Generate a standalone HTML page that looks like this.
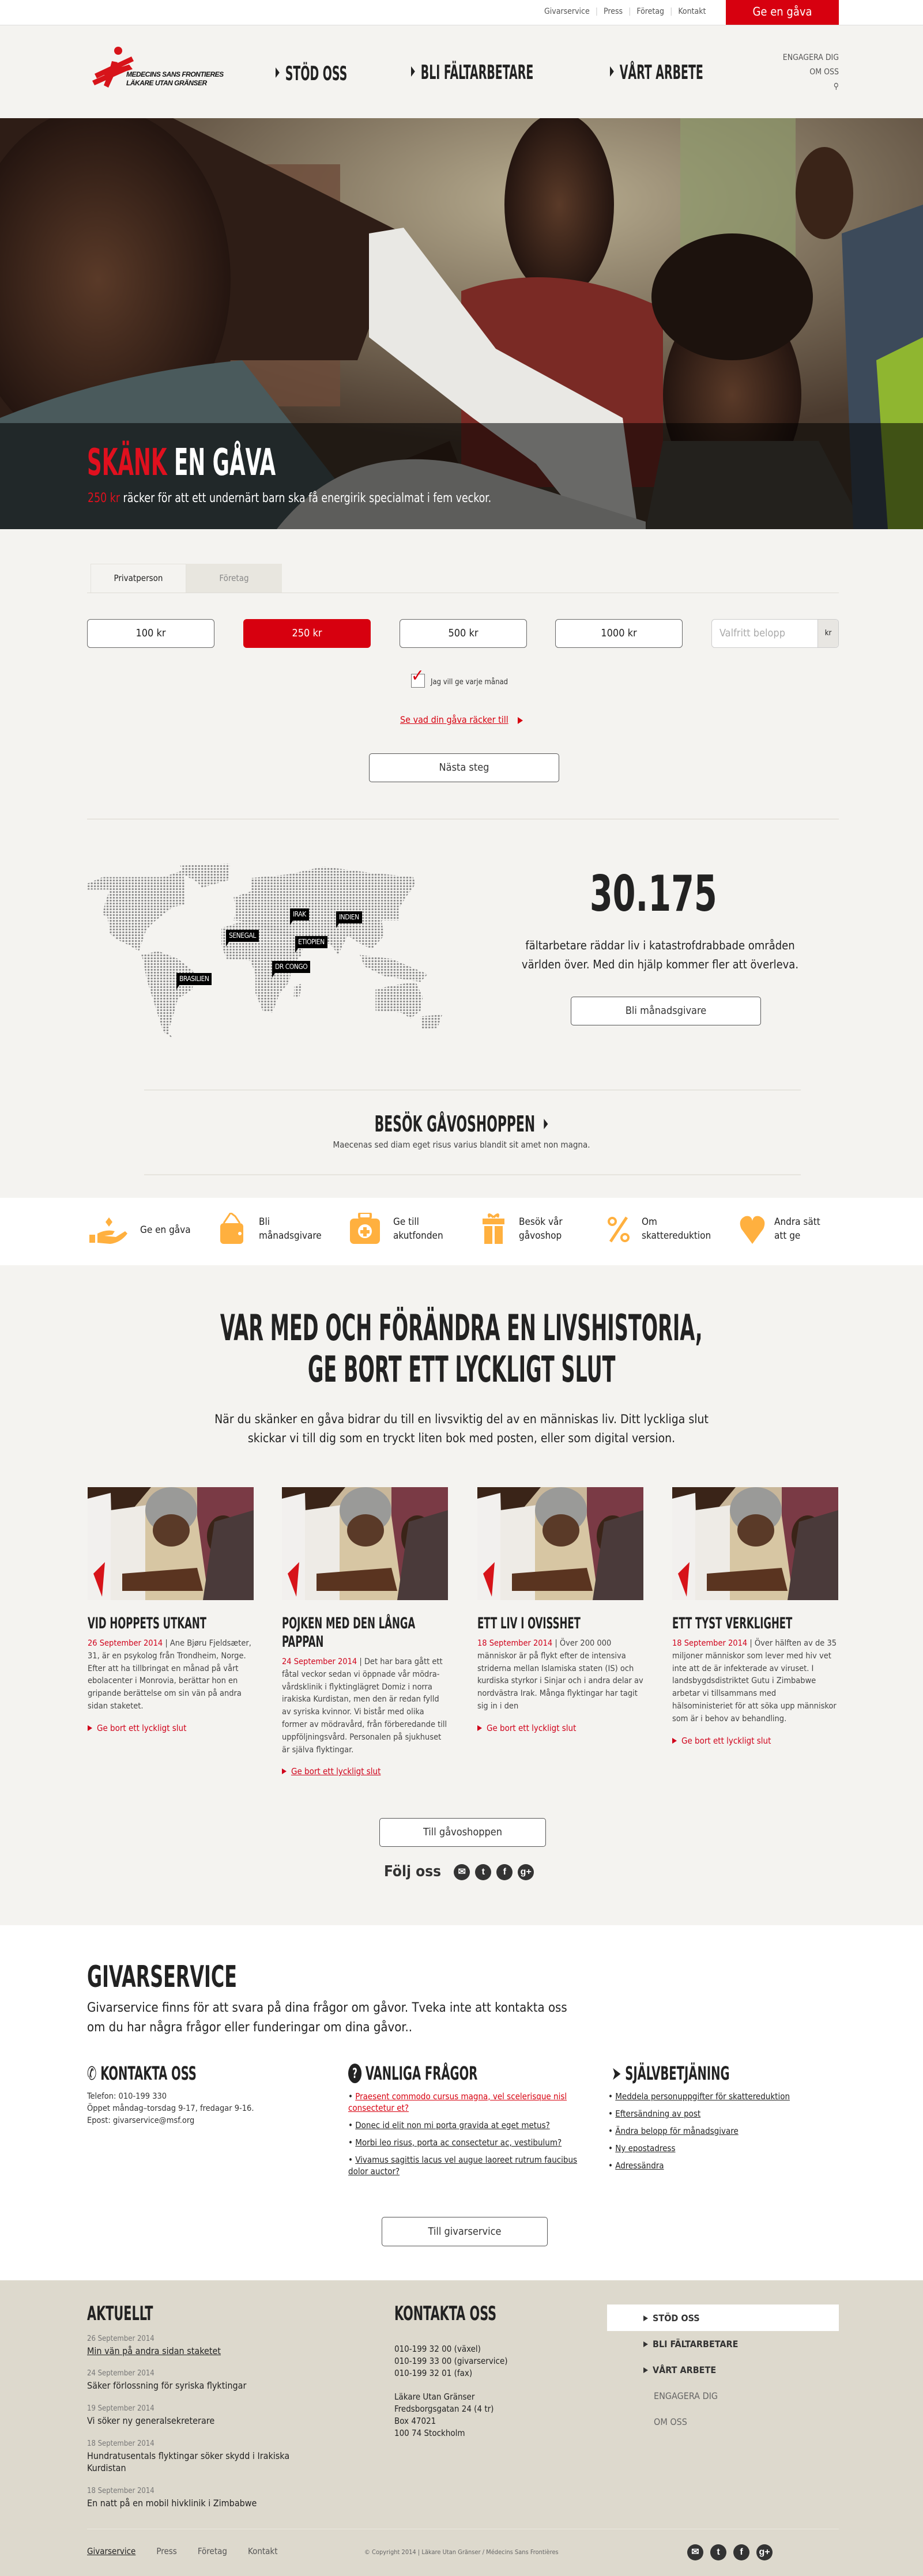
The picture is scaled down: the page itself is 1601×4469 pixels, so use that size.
<!DOCTYPE html>
<html><head><meta charset="utf-8"><style>
*{margin:0;padding:0;box-sizing:border-box}
body{width:1601px;height:4469px;position:relative;background:#f4f3f0;font-family:"Liberation Sans Narrow","DejaVu Sans Condensed","Liberation Sans",sans-serif;color:#222;overflow:hidden}
.a{position:absolute}
.h{font-family:"DejaVu Sans Condensed","Liberation Sans",sans-serif;font-weight:bold;text-transform:uppercase;color:#222;white-space:nowrap}
.sx{display:inline-block;transform:scaleX(.68);transform-origin:left top;white-space:nowrap}
.sxc{display:inline-block;transform:scaleX(.7);transform-origin:center top;white-space:nowrap}
.btn{position:absolute;border:1px solid #555;border-radius:5px;background:#fff;text-align:center;font-size:18px;color:#333}
.amt{position:absolute;top:1074px;height:50px;width:221px;border:1px solid #666;border-radius:6px;background:#fff;text-align:center;line-height:48px;font-size:18px;color:#222}
.tag{position:absolute;background:#000;color:#fff;font-size:12px;line-height:21px;padding:0 5px;letter-spacing:-0.5px}
.tag:after{content:"";position:absolute;left:0;bottom:-8px;border-left:5px solid #000;border-bottom:8px solid transparent}
.ic{position:absolute;top:2108px;font-size:17px;color:#222;line-height:24px}
.card{position:absolute;top:2580px;width:288px}
.card .img{width:288px;height:196px;display:block}
.card h3{font-family:"DejaVu Sans Condensed",sans-serif;font-size:27px;line-height:32px;margin-top:25px;color:#222;text-transform:uppercase;height:auto}
.card p{font-size:14.5px;line-height:21.8px;color:#444;margin-top:8px}
.card p b{color:#d0021b;font-weight:normal}
.card .lk{color:#d0021b;font-size:15px;margin-top:17px}
.tri{display:inline-block;border-left:8px solid #d0021b;border-top:5px solid transparent;border-bottom:5px solid transparent;margin-right:8px}
.ul li{list-style:none;font-size:15px;line-height:20px;margin-bottom:10px}
.ul a{color:#222;text-decoration:underline}
.soc{display:inline-block;width:28px;height:28px;border-radius:50%;background:#333;color:#fff;text-align:center;line-height:28px;font-size:16px;font-weight:bold;margin-right:9px;font-family:"Liberation Sans",sans-serif;vertical-align:middle}
</style></head><body>

<!-- top bar -->
<div class="a" style="left:0;top:0;width:1601px;height:44px;background:#fff;border-bottom:1px solid #ddd"></div>
<div class="a" style="top:12px;left:944px;font-size:14px;color:#555;white-space:nowrap">Givarservice<span style="color:#ccc;margin:0 10px">|</span>Press<span style="color:#ccc;margin:0 10px">|</span>Företag<span style="color:#ccc;margin:0 10px">|</span>Kontakt</div>
<div class="a" style="left:1259px;top:0;width:196px;height:43px;background:#d7000f;color:#fff;font-size:20px;text-align:center;line-height:40px">Ge en gåva</div>

<!-- header -->
<div class="a" style="left:0;top:45px;width:1601px;height:160px;background:#f4f3f0"></div>
<svg class="a" style="left:158px;top:78px" width="90" height="76" viewBox="0 0 90 76">
<circle cx="47" cy="10" r="7" fill="#d7141a"/>
<path d="M6 50 L70 20 L74 28 L10 58Z M2 62 L60 36 L64 44 L6 70Z M20 48 L66 34 L72 42 L26 56Z" fill="#d7141a"/>
<path d="M36 28 L46 30 L40 52 L30 74 L22 70 L30 50Z" fill="#d7141a"/>
</svg>
<div class="a" style="left:219px;top:122px;font-size:12px;font-weight:bold;font-style:italic;color:#111;line-height:15px;font-family:'Liberation Sans',sans-serif;letter-spacing:-0.5px">MEDECINS SANS FRONTIERES<br>LÄKARE UTAN GRÄNSER</div>
<div class="a h" style="left:478px;top:108px;font-size:34px"><span class="sx" style="transform:scaleX(.62)"><span style="display:inline-block;border-left:11px solid #222;border-top:9px solid transparent;border-bottom:9px solid transparent;margin-right:16px;vertical-align:4px"></span>Stöd oss</span></div>
<div class="a h" style="left:713px;top:106px;font-size:34px"><span class="sx" style="transform:scaleX(.62)"><span style="display:inline-block;border-left:11px solid #222;border-top:9px solid transparent;border-bottom:9px solid transparent;margin-right:16px;vertical-align:4px"></span>Bli fältarbetare</span></div>
<div class="a h" style="left:1058px;top:106px;font-size:34px"><span class="sx" style="transform:scaleX(.62)"><span style="display:inline-block;border-left:11px solid #222;border-top:9px solid transparent;border-bottom:9px solid transparent;margin-right:16px;vertical-align:4px"></span>Vårt arbete</span></div>
<div class="a" style="right:146px;top:88px;font-size:14px;color:#555;text-align:right;line-height:25px">ENGAGERA DIG<br>OM OSS<br><span style="font-size:14px">⚲</span></div>

<!-- hero -->
<svg class="a" style="left:0;top:205px" width="1601" height="713" viewBox="0 0 1601 713">
<defs>
<radialGradient id="bg1" cx="0.6" cy="0.2" r="0.6"><stop offset="0" stop-color="#b8ad90"/><stop offset="1" stop-color="#4a3a2e"/></radialGradient>
<radialGradient id="face" cx="0.5" cy="0.5" r="0.5"><stop offset="0" stop-color="#5a3a28"/><stop offset="1" stop-color="#241510"/></radialGradient>
</defs>
<rect width="1601" height="713" fill="url(#bg1)"/>
<rect x="1180" y="0" width="200" height="300" fill="#8f9a6c" opacity="0.7"/>
<rect x="330" y="80" width="260" height="420" fill="#6d4b3a" opacity="0.8"/>
<rect x="370" y="130" width="60" height="200" fill="#3f8a4a"/>
<rect x="450" y="160" width="60" height="240" fill="#b23a3a" opacity="0.7"/>
<ellipse cx="970" cy="150" rx="95" ry="160" fill="url(#face)"/>
<path d="M800 300 Q960 240 1150 330 L1150 640 L800 640Z" fill="#7a2a25"/>
<path d="M0 0 L300 0 L700 200 L620 420 L400 420 L300 700 L0 713Z" fill="#2e1d16"/>
<ellipse cx="170" cy="280" rx="230" ry="300" fill="url(#face)"/>
<path d="M0 520 Q200 440 420 420 L600 650 L600 713 L0 713Z" fill="#4a5a5c"/>
<path d="M560 650 L780 560 L830 690 L620 713Z" fill="#3a261c"/>
<path d="M640 200 L700 190 L860 400 L1080 520 L1110 740 L1020 713 L930 600 L820 520 L640 380Z" fill="#e9e8e4"/>
<path d="M480 713 Q600 560 800 600 L1120 700 L1120 713Z" fill="#cfcfcb"/>
<ellipse cx="1270" cy="480" rx="120" ry="170" fill="url(#face)"/>
<ellipse cx="1270" cy="310" rx="140" ry="110" fill="#1c120d"/>
<path d="M1150 560 L1420 560 L1500 713 L1120 713Z" fill="#4f4a40"/>
<path d="M1460 200 L1601 150 L1601 713 L1480 713Z" fill="#3c4a5a"/>
<path d="M1520 420 L1601 380 L1601 713 L1540 713Z" fill="#8fb630"/>
<ellipse cx="1430" cy="130" rx="50" ry="80" fill="#3a2418"/>
<rect x="0" y="529" width="1601" height="184" fill="#000" opacity="0.55"/>
</svg>
<div class="a h" style="left:151px;top:770px;font-size:64px;line-height:66px"><span class="sx" style="transform:scaleX(.62)"><span style="color:#e0101e">Skänk</span> <span style="color:#fff">en gåva</span></span></div>
<div class="a" style="left:152px;top:852px;font-size:22px;color:#fff;white-space:nowrap"><span class="sx" style="transform:scaleX(.88)"><span style="color:#e0101e">250 kr</span> räcker för att ett undernärt barn ska få energirik specialmat i fem veckor.</span></div>

<!-- donation form -->
<div class="a" style="left:157px;top:978px;width:166px;height:50px;background:#f4f3f0;border:1px solid #e4e2dc;border-bottom:none;text-align:center;line-height:48px;font-size:15px;color:#222">Privatperson</div>
<div class="a" style="left:323px;top:978px;width:166px;height:50px;background:#e8e6df;text-align:center;line-height:50px;font-size:15px;color:#888">Företag</div>
<div class="a" style="left:151px;top:1028px;width:1304px;height:1px;background:#dedcd6"></div>
<div class="amt" style="left:151px">100 kr</div>
<div class="amt" style="left:422px;background:#d7000f;border-color:#d7000f;color:#fff">250 kr</div>
<div class="amt" style="left:693px">500 kr</div>
<div class="amt" style="left:963px">1000 kr</div>
<div class="a" style="left:1234px;top:1074px;width:221px;height:50px;border:1px solid #ccc;border-radius:6px;background:#fff"></div>
<div class="a" style="left:1418px;top:1075px;width:36px;height:48px;background:#e8e6e2;border-left:1px solid #ccc;border-radius:0 6px 6px 0;text-align:center;line-height:48px;font-size:13px">kr</div>
<div class="a" style="left:1248px;top:1088px;font-size:18px;color:#aaa">Valfritt belopp</div>
<div class="a" style="left:713px;top:1169px;width:24px;height:24px;border:1px solid #777;background:#fff"></div>
<div class="a" style="left:713px;top:1158px;font-size:30px;color:#d7000f;line-height:30px">✓</div>
<div class="a" style="left:747px;top:1176px;font-size:13px;color:#333">Jag vill ge varje månad</div>
<div class="a" style="left:694px;top:1239px;font-size:16px;color:#d7000f;text-decoration:underline">Se vad din gåva räcker till</div>
<div class="a" style="left:898px;top:1244px;border-left:9px solid #d7000f;border-top:6px solid transparent;border-bottom:6px solid transparent"></div>
<div class="btn" style="left:640px;top:1307px;width:330px;height:50px;line-height:48px">Nästa steg</div>
<div class="a" style="left:151px;top:1420px;width:1304px;height:2px;background:#e6e4de"></div>

<!-- map -->
<svg class="a" style="left:140px;top:1490px" width="660" height="320" viewBox="0 0 1568 960" preserveAspectRatio="none">
<defs><pattern id="dots" width="13" height="15" patternUnits="userSpaceOnUse"><ellipse cx="6.5" cy="7.5" rx="4" ry="5" fill="#8a8a8a"/></pattern></defs>
<g fill="url(#dots)">
<path d="M25 130 L90 95 L340 95 L420 60 L430 140 L430 240 L380 250 L300 330 L270 370 L240 480 L200 450 L150 420 L120 390 L110 300 L90 290 L100 230 L120 160 L25 160Z"/>
<path d="M410 35 L615 25 L610 110 L500 150 L480 120 L420 80Z"/>
<path d="M250 500 L320 480 L400 520 L470 590 L460 680 L400 730 L380 820 L360 900 L380 935 L340 900 L310 780 L270 620 L260 540Z"/>
<path d="M630 200 L700 170 L700 100 L860 80 L1000 40 L1180 70 L1370 95 L1380 130 L1340 200 L1310 260 L1310 320 L1240 320 L1250 400 L1200 470 L1150 440 L1100 400 L1060 500 L1040 460 L1000 420 L920 400 L850 400 L780 380 L700 330 L630 320 L640 260Z"/>
<path d="M580 360 L680 320 L780 340 L860 380 L920 430 L910 500 L870 560 L860 640 L820 700 L790 800 L750 790 L720 700 L720 600 L700 530 L600 520 L580 450Z"/>
<path d="M880 660 L912 650 L900 725 L878 722Z"/>
<path d="M1150 500 L1280 520 L1430 600 L1400 640 L1250 610 L1170 560Z"/>
<path d="M1215 680 L1280 660 L1380 640 L1410 720 L1400 790 L1360 830 L1320 800 L1215 790Z"/>
<path d="M1400 820 L1490 810 L1470 880 L1405 885Z"/>
</g></svg>
<div class="tag" style="left:503px;top:1576px">IRAK</div>
<div class="tag" style="left:583px;top:1581px">INDIEN</div>
<div class="tag" style="left:392px;top:1613px">SENEGAL</div>
<div class="tag" style="left:512px;top:1624px">ETIOPIEN</div>
<div class="tag" style="left:472px;top:1667px">DR CONGO</div>
<div class="tag" style="left:306px;top:1688px">BRASILIEN</div>

<div class="a h" style="left:983px;width:300px;text-align:center;top:1504px;font-size:86px;line-height:94px"><span class="sxc" style="transform:scaleX(.74)">30.175</span></div>
<div class="a" style="left:840px;width:610px;text-align:center;top:1624px;font-size:20px;line-height:33px;color:#222">fältarbetare räddar liv i katastrofdrabbade områden<br>världen över. Med din hjälp kommer fler att överleva.</div>
<div class="btn" style="left:990px;top:1729px;width:330px;height:50px;line-height:48px">Bli månadsgivare</div>

<div class="a" style="left:250px;top:1890px;width:1139px;height:2px;background:#e6e4de"></div>
<div class="a h" style="left:0;width:1601px;text-align:center;top:1930px;font-size:38px;line-height:40px"><span class="sxc" style="transform:scaleX(.64)">Besök gåvoshoppen <span style="display:inline-block;border-left:11px solid #222;border-top:9px solid transparent;border-bottom:9px solid transparent;margin-left:12px;vertical-align:4px"></span></span></div>
<div class="a" style="left:0;width:1601px;text-align:center;top:1977px;font-size:15px;color:#444">Maecenas sed diam eget risus varius blandit sit amet non magna.</div>
<div class="a" style="left:250px;top:2037px;width:1139px;height:2px;background:#e6e4de"></div>

<!-- icon band -->
<div class="a" style="left:0;top:2078px;width:1601px;height:117px;background:#fff"></div>
<svg class="a" style="left:155px;top:2112px" width="68" height="48" viewBox="0 0 68 48"><path d="M34 0 L40 8 L34 16 L28 8Z" fill="#ffb03f"/><path d="M0 30 L10 30 L10 44 L0 44Z M14 28 Q30 20 44 24 L40 30 L26 32 L46 34 L62 24 L66 28 Q54 44 36 46 L14 44Z" fill="#ffb03f"/></svg>
<div class="ic" style="left:243px;top:2122px">Ge en gåva</div>
<svg class="a" style="left:380px;top:2104px" width="44" height="54" viewBox="0 0 44 54"><path d="M8 18 L20 0 L28 6 L36 18" stroke="#ffb03f" stroke-width="3" fill="none"/><rect x="2" y="18" width="40" height="36" rx="6" fill="#ffb03f"/><circle cx="36" cy="36" r="3" fill="#fff"/></svg>
<div class="ic" style="left:449px">Bli<br>månadsgivare</div>
<svg class="a" style="left:607px;top:2104px" width="52" height="54" viewBox="0 0 52 54"><rect x="16" y="0" width="20" height="10" rx="3" stroke="#ffb03f" stroke-width="4" fill="none"/><rect x="0" y="10" width="52" height="44" rx="7" fill="#ffb03f"/><circle cx="26" cy="32" r="12" fill="#fff"/><path d="M23 25h6v5h5v6h-5v5h-6v-5h-5v-6h5z" fill="#ffb03f"/></svg>
<div class="ic" style="left:682px">Ge till<br>akutfonden</div>
<svg class="a" style="left:837px;top:2102px" width="38" height="56" viewBox="0 0 38 56"><path d="M19 10 Q8 0 12 10 M19 10 Q30 0 26 10" stroke="#ffb03f" stroke-width="4" fill="none"/><rect x="0" y="12" width="38" height="10" fill="#ffb03f"/><rect x="3" y="25" width="14" height="31" fill="#ffb03f"/><rect x="21" y="25" width="14" height="31" fill="#ffb03f"/></svg>
<div class="ic" style="left:900px">Besök vår<br>gåvoshop</div>
<svg class="a" style="left:1053px;top:2110px" width="40" height="46" viewBox="0 0 40 46"><circle cx="9" cy="9" r="6" stroke="#ffb03f" stroke-width="4" fill="none"/><circle cx="31" cy="37" r="6" stroke="#ffb03f" stroke-width="4" fill="none"/><path d="M34 2 L6 44" stroke="#ffb03f" stroke-width="5"/></svg>
<div class="ic" style="left:1113px">Om<br>skattereduktion</div>
<svg class="a" style="left:1283px;top:2108px" width="44" height="50" viewBox="0 0 44 50"><path d="M22 50 L3 24 Q-4 8 10 2 Q20 0 22 10 Q24 0 34 2 Q48 8 41 24Z" fill="#ffb03f"/></svg>
<div class="ic" style="left:1343px">Andra sätt<br>att ge</div>

<!-- story section -->
<div class="a h" style="left:0;width:1601px;text-align:center;top:2268px;font-size:62px;line-height:72px"><span class="sxc" style="transform:scaleX(.6)">Var med och förändra en livshistoria,</span><br><span class="sxc" style="transform:scaleX(.6)">ge bort ett lyckligt slut</span></div>
<div class="a" style="left:350px;width:901px;text-align:center;top:2446px;font-size:21px;line-height:33px;color:#222">När du skänker en gåva bidrar du till en livsviktig del av en människas liv. Ditt lyckliga slut skickar vi till dig som en tryckt liten bok med posten, eller som digital version.</div>

<svg width="0" height="0" style="position:absolute"><defs>
<symbol id="photo" viewBox="0 0 288 196">
<rect width="288" height="196" fill="#c9b79a"/>
<rect x="190" y="0" width="98" height="196" fill="#7a3a45"/>
<path d="M0 0 L110 0 L60 60 L0 60Z" fill="#3a2418"/>
<path d="M0 20 L40 10 L45 196 L0 196Z" fill="#f2f0ee"/>
<path d="M40 40 L110 30 L120 196 L40 196Z" fill="#eeebe6"/>
<path d="M100 40 L190 50 L210 196 L100 196Z" fill="#d7c6a3"/>
<ellipse cx="145" cy="40" rx="45" ry="40" fill="#9a9a98"/>
<ellipse cx="145" cy="75" rx="32" ry="28" fill="#5a3a28"/>
<ellipse cx="235" cy="85" rx="28" ry="36" fill="#3a2418"/>
<path d="M220 60 L288 40 L288 196 L200 196Z" fill="#4a3a3a"/>
<path d="M60 150 L190 140 L200 180 L60 180Z" fill="#5a3420"/>
<path d="M10 150 L30 130 L25 190Z" fill="#d7141a"/>
</symbol></defs></svg>

<div class="card" style="left:152px"><svg class="img"><use href="#photo"/></svg>
<h3><span class="sx">Vid hoppets utkant</span></h3>
<p><b>26 September 2014</b> | Ane Bjøru Fjeldsæter, 31, är en psykolog från Trondheim, Norge. Efter att ha tillbringat en månad på vårt ebolacenter i Monrovia, berättar hon en gripande berättelse om sin vän på andra sidan staketet.</p>
<div class="lk"><span class="tri"></span>Ge bort ett lyckligt slut</div></div>

<div class="card" style="left:489px"><svg class="img"><use href="#photo"/></svg>
<h3><span class="sx">Pojken med den långa</span><br><span class="sx">pappan</span></h3>
<p><b>24 September 2014</b> | Det har bara gått ett fåtal veckor sedan vi öppnade vår mödra­vårdsklinik i flyktinglägret Domiz i norra irakiska Kurdistan, men den är redan fylld av syriska kvinnor. Vi bistår med olika former av mödravård, från förberedande till uppföljningsvård. Personalen på sjukhuset är själva flyktingar.</p>
<div class="lk"><span class="tri"></span><u>Ge bort ett lyckligt slut</u></div></div>

<div class="card" style="left:828px"><svg class="img"><use href="#photo"/></svg>
<h3><span class="sx">Ett liv i ovisshet</span></h3>
<p><b>18 September 2014</b> | Över 200 000 människor är på flykt efter de intensiva striderna mellan Islamiska staten (IS) och kurdiska styrkor i Sinjar och i andra delar av nordvästra Irak. Många flyktingar har tagit sig in i den</p>
<div class="lk"><span class="tri"></span>Ge bort ett lyckligt slut</div></div>

<div class="card" style="left:1166px"><svg class="img"><use href="#photo"/></svg>
<h3><span class="sx">Ett tyst verklighet</span></h3>
<p><b>18 September 2014</b> | Över hälften av de 35 miljoner människor som lever med hiv vet inte att de är infekterade av viruset. I lands­bygdsdistriktet Gutu i Zimbabwe arbetar vi tillsammans med hälsoministeriet för att söka upp människor som är i behov av be­handling.</p>
<div class="lk"><span class="tri"></span>Ge bort ett lyckligt slut</div></div>

<div class="btn" style="left:658px;top:3154px;width:289px;height:50px;line-height:48px">Till gåvoshoppen</div>
<div class="a" style="left:666px;top:3232px;font-size:26px;font-weight:bold;color:#333;white-space:nowrap">Följ oss <span style="margin-left:14px"></span><span class="soc">✉</span><span class="soc">t</span><span class="soc">f</span><span class="soc">g+</span></div>

<!-- givarservice -->
<div class="a" style="left:0;top:3340px;width:1601px;height:616px;background:#fff"></div>
<div class="a h" style="left:151px;top:3402px;font-size:52px;line-height:56px"><span class="sx">Givarservice</span></div>
<div class="a" style="left:151px;top:3467px;width:840px;font-size:22px;line-height:34px;color:#222">Givarservice finns för att svara på dina frågor om gåvor. Tveka inte att kontakta oss om du har några frågor eller funderingar om dina gåvor..</div>

<div class="a h" style="left:151px;top:3580px;font-size:32px;line-height:34px"><span class="sx">✆ Kontakta oss</span></div>
<div class="a" style="left:151px;top:3627px;font-size:14.5px;line-height:21px;color:#333">Telefon: 010-199 330<br>Öppet måndag–torsdag 9-17, fredagar 9-16.<br>Epost: givarservice@msf.org</div>

<div class="a h" style="left:604px;top:3580px;font-size:32px;line-height:34px"><span class="sx"><span style="display:inline-block;width:34px;height:34px;border-radius:50%;background:#222;color:#fff;font-size:24px;text-align:center;line-height:34px;vertical-align:top">?</span> Vanliga frågor</span></div>
<ul class="a ul" style="left:604px;top:3627px;width:400px">
<li>• <a style="color:#d7000f">Praesent commodo cursus magna, vel scelerisque nisl consectetur et?</a></li>
<li>• <a>Donec id elit non mi porta gravida at eget metus?</a></li>
<li>• <a>Morbi leo risus, porta ac consectetur ac, vestibulum?</a></li>
<li>• <a>Vivamus sagittis lacus vel augue laoreet rutrum faucibus dolor auctor?</a></li>
</ul>

<div class="a h" style="left:1061px;top:3580px;font-size:32px;line-height:34px"><span class="sx">➤ Självbetjäning</span></div>
<ul class="a ul" style="left:1055px;top:3627px;width:400px">
<li>• <a>Meddela personuppgifter för skattereduktion</a></li>
<li>• <a>Eftersändning av post</a></li>
<li>• <a>Ändra belopp för månadsgivare</a></li>
<li>• <a>Ny epostadress</a></li>
<li>• <a>Adressändra</a></li>
</ul>
<div class="btn" style="left:662px;top:3846px;width:288px;height:51px;line-height:49px">Till givarservice</div>

<!-- footer -->
<div class="a" style="left:0;top:3956px;width:1601px;height:513px;background:#ddd9cd"></div>
<div class="a h" style="left:151px;top:3996px;font-size:34px;line-height:36px"><span class="sx">Aktuellt</span></div>
<div class="a" style="left:151px;top:4047px;width:400px;font-size:16px;line-height:21px;color:#222">
<div style="font-size:13px;color:#777">26 September 2014</div><div style="text-decoration:underline">Min vän på andra sidan staketet</div>
<div style="font-size:13px;color:#777;margin-top:18px">24 September 2014</div><div>Säker förlossning för syriska flyktingar</div>
<div style="font-size:13px;color:#777;margin-top:19px">19 September 2014</div><div>Vi söker ny generalsekreterare</div>
<div style="font-size:13px;color:#777;margin-top:19px">18 September 2014</div><div>Hundratusentals flyktingar söker skydd i Irakiska Kurdistan</div>
<div style="font-size:13px;color:#777;margin-top:19px">18 September 2014</div><div>En natt på en mobil hivklinik i Zimbabwe</div>
</div>
<div class="a h" style="left:684px;top:3996px;font-size:34px;line-height:36px"><span class="sx">Kontakta oss</span></div>
<div class="a" style="left:684px;top:4065px;font-size:15px;line-height:21px;color:#222">010-199 32 00 (växel)<br>010-199 33 00 (givarservice)<br>010-199 32 01 (fax)<br><div style="height:20px"></div>Läkare Utan Gränser<br>Fredsborgsgatan 24 (4 tr)<br>Box 47021<br>100 74 Stockholm</div>
<div class="a" style="left:1053px;top:3998px;width:402px;height:46px;background:#fff"></div>
<div class="a" style="left:1116px;top:4012px;font-size:16px;font-weight:bold;color:#333;line-height:45px;text-transform:uppercase">
<div style="line-height:19px"><span class="tri" style="border-left-color:#333"></span>Stöd oss</div>
<div style="margin-top:26px;line-height:19px"><span class="tri" style="border-left-color:#333"></span>Bli fältarbetare</div>
<div style="margin-top:26px;line-height:19px"><span class="tri" style="border-left-color:#333"></span>Vårt arbete</div>
<div style="margin-top:26px;line-height:19px;font-weight:normal;color:#666;padding-left:18px">Engagera dig</div>
<div style="margin-top:26px;line-height:19px;font-weight:normal;color:#666;padding-left:18px">Om oss</div>
</div>
<div class="a" style="left:151px;top:4387px;width:1304px;height:1px;background:#ebe8e0"></div>
<div class="a" style="left:151px;top:4417px;font-size:15px;color:#555;white-space:nowrap"><u style="color:#222">Givarservice</u><span style="margin-left:36px">Press</span><span style="margin-left:36px">Företag</span><span style="margin-left:36px">Kontakt</span></div>
<div class="a" style="left:632px;top:4421px;font-size:11px;color:#666">© Copyright 2014 | Läkare Utan Gränser / Médecins Sans Frontières</div>
<div class="a" style="left:1192px;top:4414px;white-space:nowrap"><span class="soc" style="margin-right:12px">✉</span><span class="soc" style="margin-right:12px">t</span><span class="soc" style="margin-right:12px">f</span><span class="soc">g+</span></div>
</body></html>
